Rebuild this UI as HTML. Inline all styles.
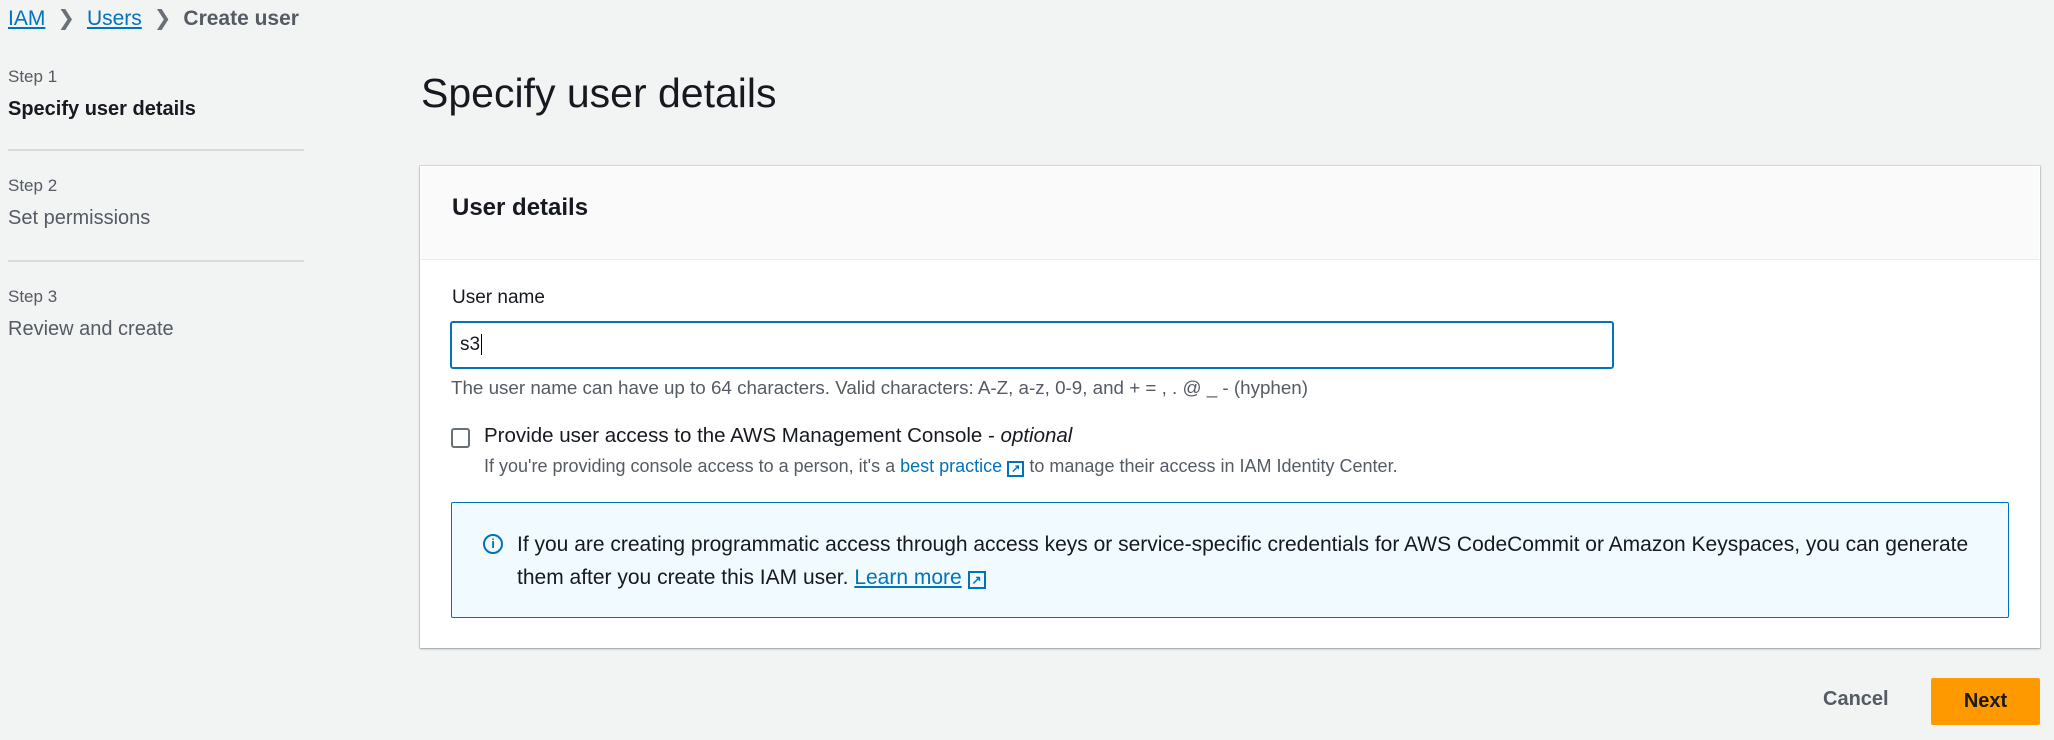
<!DOCTYPE html>
<html><head><meta charset="utf-8"><style>
*{box-sizing:border-box;margin:0;padding:0}
body{width:2054px;height:740px;background:#f2f3f3;font-family:"Liberation Sans",sans-serif;color:#16191f;position:relative;overflow:hidden}
.a{position:absolute;white-space:nowrap}
.link{color:#0073bb;text-decoration:underline}
.sm{font-size:17px;color:#545b64}
.div{position:absolute;left:8px;width:296px;height:2px;background:#d5dbdb}
</style></head><body>
<div class="a" style="left:8px;top:6px;font-size:21px"><span class="link">IAM</span><span style="color:#687078;margin:0 12px">&#x276F;</span><span class="link">Users</span><span style="color:#687078;margin:0 12px">&#x276F;</span><span style="color:#545b64;font-weight:bold">Create user</span></div>

<div class="a sm" style="left:8px;top:67px">Step 1</div>
<div class="a" style="left:8px;top:98px;font-size:20px;font-weight:bold">Specify user details</div>
<div class="div" style="top:149px"></div>
<div class="a sm" style="left:8px;top:176px">Step 2</div>
<div class="a" style="left:8px;top:207px;font-size:20px;color:#545b64">Set permissions</div>
<div class="div" style="top:260px"></div>
<div class="a sm" style="left:8px;top:287px">Step 3</div>
<div class="a" style="left:8px;top:318px;font-size:20px;color:#545b64">Review and create</div>

<div class="a" style="left:421px;top:70px;font-size:41px">Specify user details</div>

<div class="a" style="left:420px;top:166px;width:1620px;height:482px;background:#fff;box-shadow:0 1px 2px rgba(0,28,36,.3),0 0 0 1px #d5dbdb"></div>
<div class="a" style="left:421px;top:167px;width:1618px;height:93px;background:#fafafa;border-bottom:1px solid #eaeded"></div>
<div class="a" style="left:452px;top:194px;font-size:24px;font-weight:bold">User details</div>

<div class="a" style="left:452px;top:287px;font-size:19px">User name</div>
<div class="a" style="left:450px;top:321px;width:1164px;height:48px;border:2px solid #0073bb;border-radius:3px;background:#fff"></div>
<div class="a" style="left:460px;top:334px;font-size:19px">s3<span style="border-left:1px solid #000;margin-left:1px"></span></div>
<div class="a" style="left:451px;top:377px;font-size:18.8px;color:#545b64">The user name can have up to 64 characters. Valid characters: A-Z, a-z, 0-9, and + = , . @ _ - (hyphen)</div>

<div class="a" style="left:451px;top:428px;width:19px;height:20px;border:2px solid #687078;border-radius:3px"></div>
<div class="a" style="left:484px;top:424px;font-size:20.5px">Provide user access to the AWS Management Console - <i>optional</i></div>
<div class="a" style="left:484px;top:456px;font-size:18px;color:#545b64">If you're providing console access to a person, it's a <span style="color:#0073bb">best practice</span> <span style="color:#0073bb;font-weight:bold;border:2px solid #0073bb;font-size:11px;padding:0 2px">&#x2197;</span> to manage their access in IAM Identity Center.</div>

<div class="a" style="left:451px;top:502px;width:1558px;height:116px;background:#f1faff;border:1px solid #0073bb;border-radius:2px"></div>
<div class="a" style="left:483px;top:534px;width:20px;height:20px;border:2px solid #0073bb;border-radius:50%;color:#0073bb;font-size:13px;font-weight:bold;text-align:center;line-height:16px">i</div>
<div class="a" style="left:517px;top:528px;font-size:21px;line-height:33px">If you are creating programmatic access through access keys or service-specific credentials for AWS CodeCommit or Amazon Keyspaces, you can generate<br>them after you create this IAM user. <span class="link">Learn more</span> <span style="color:#0073bb;font-weight:bold;border:2px solid #0073bb;font-size:12px;padding:0 2px">&#x2197;</span></div>

<div class="a" style="left:1823px;top:688px;font-size:20px;font-weight:bold;color:#545b64">Cancel</div>
<div class="a" style="left:1931px;top:678px;width:109px;height:47px;background:#ff9900;border-radius:2px;font-size:20px;font-weight:bold;text-align:center;line-height:47px">Next</div>
</body></html>
